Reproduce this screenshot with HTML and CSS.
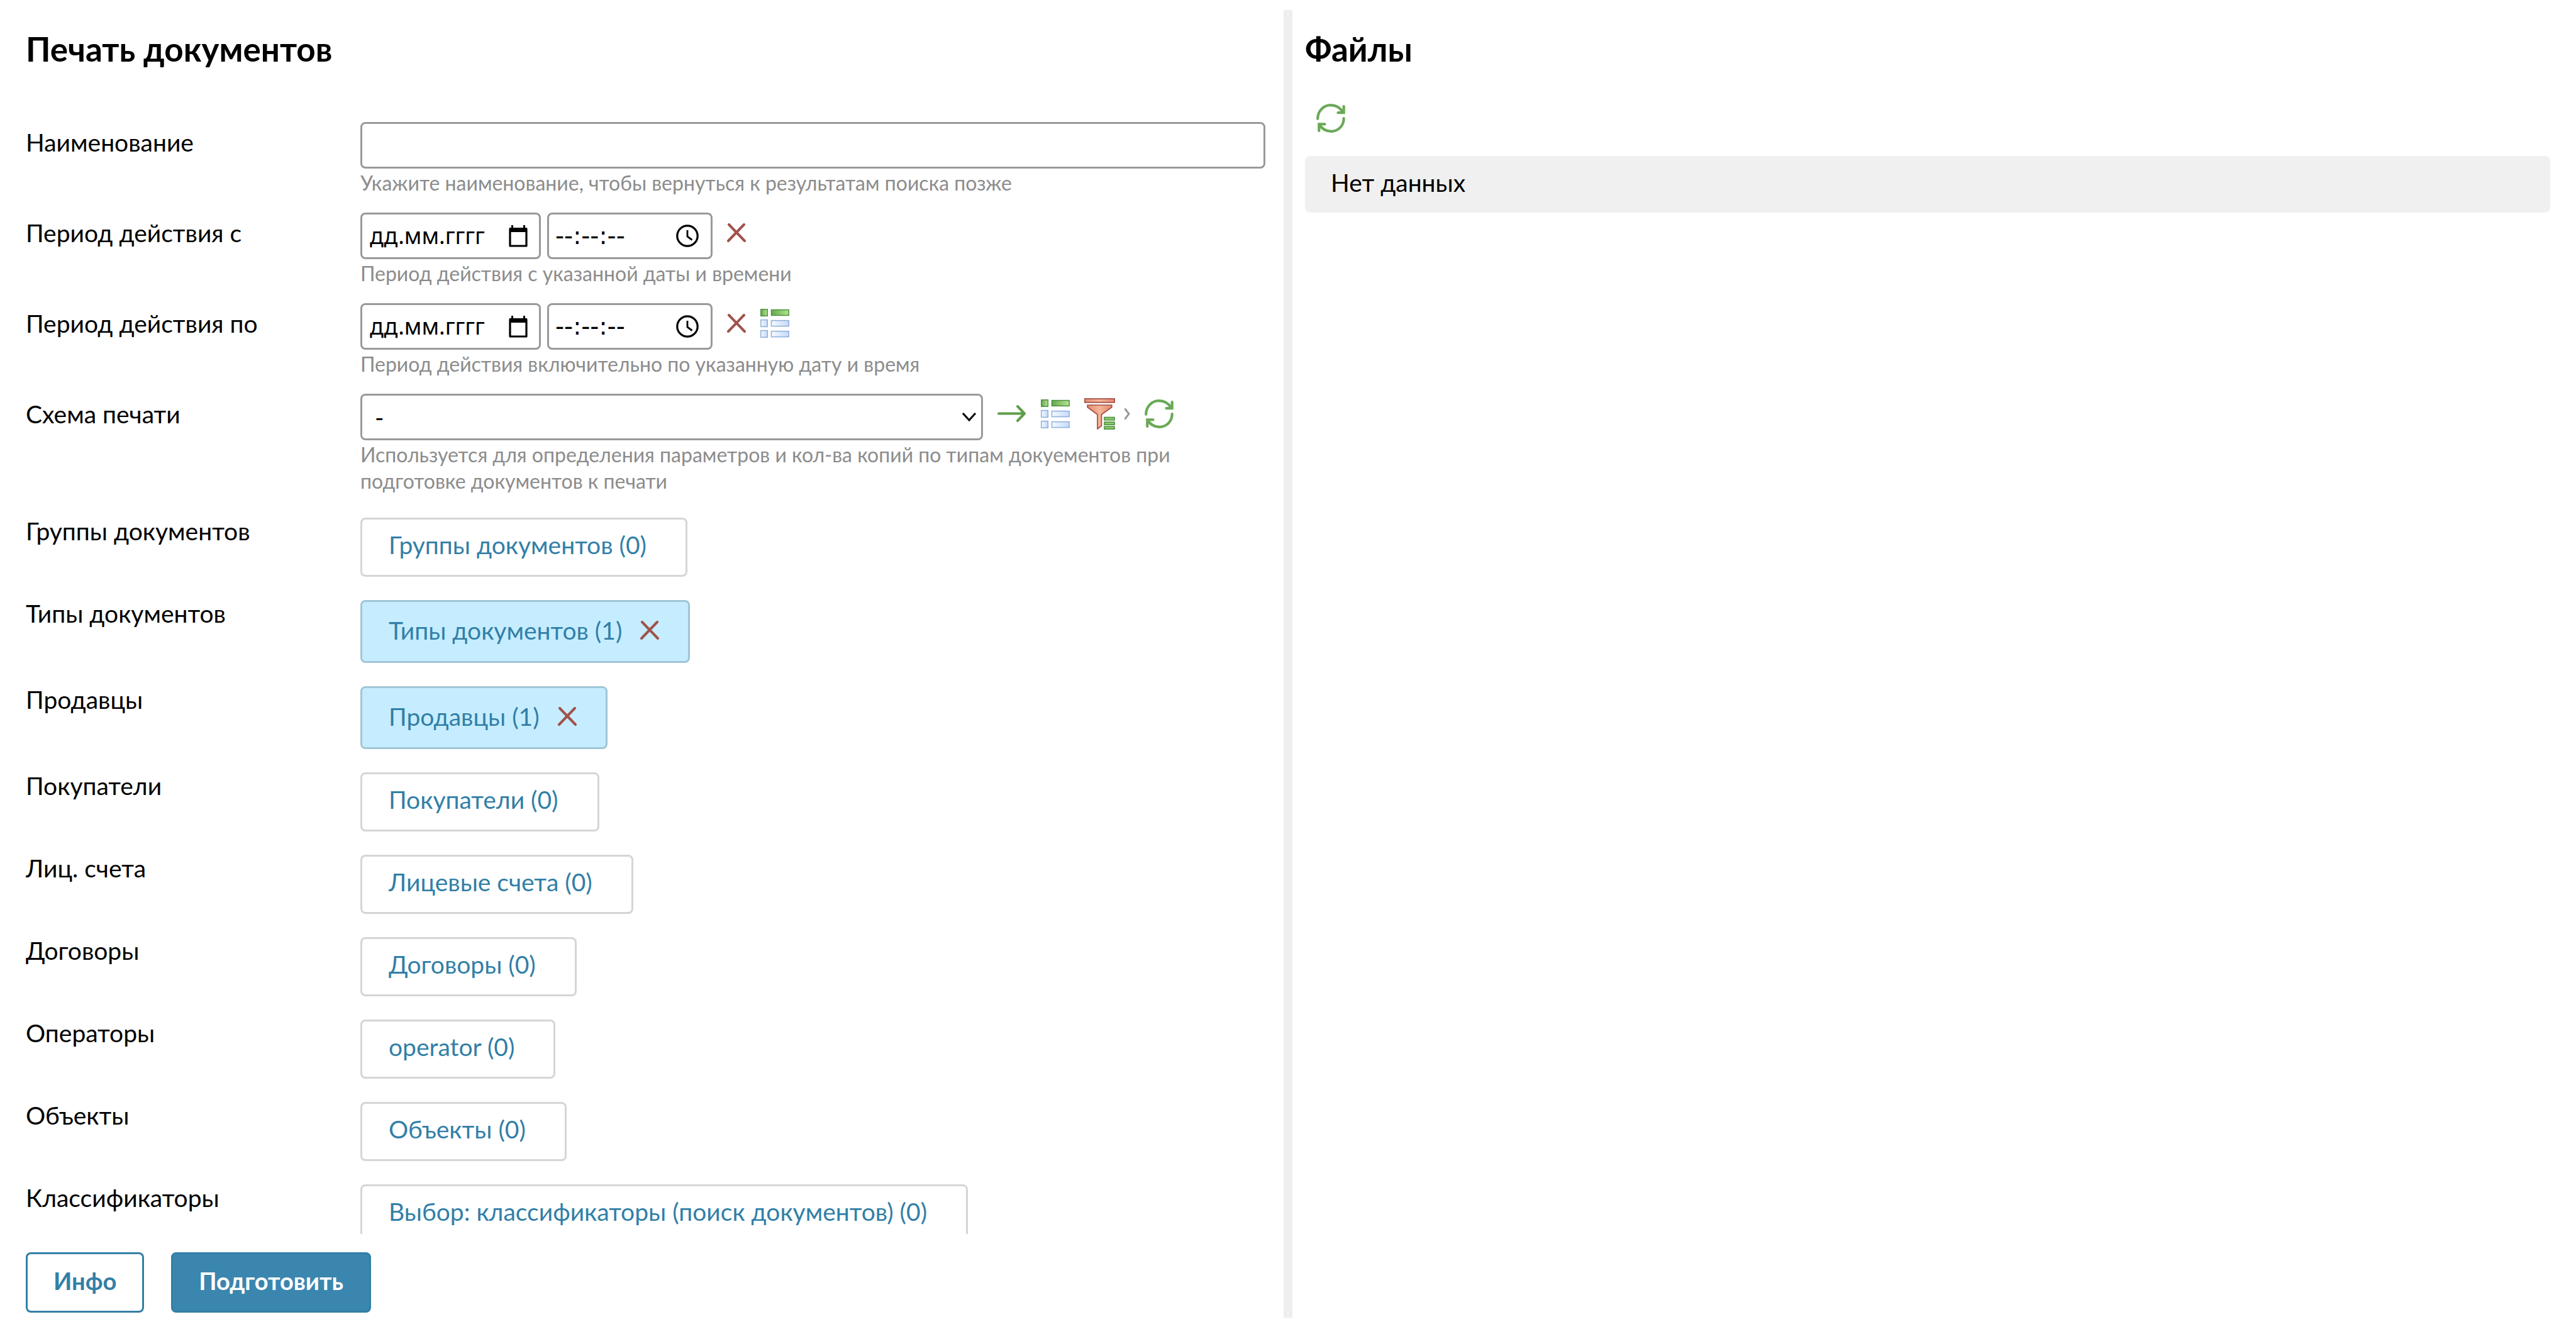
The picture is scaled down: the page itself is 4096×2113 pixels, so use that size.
FILE: index.html
```
<!DOCTYPE html>
<html lang="ru">
<head>
    <meta charset="UTF-8">
    <meta name="viewport" content="width=device-width, initial-scale=1.0">
    <title>Печать документов</title>

    <link rel="stylesheet" href="styles.css">
</head>
<body>

    <!-- shared icons -->
    <svg class="sprite" width="0" height="0" aria-hidden="true">
        <defs>
            <linearGradient id="green" x1="0" x2="1" y1="0" y2="0">
                <stop offset="0" stop-color="#64a74c"/>
                <stop offset="1" stop-color="#b4e692"/>
            </linearGradient>
            <linearGradient id="blue" x1="0" x2="1" y1="0" y2="0">
                <stop offset="0" stop-color="#f4f9ff"/>
                <stop offset="1" stop-color="#c6dafa"/>
            </linearGradient>
            <linearGradient id="red" x1="0" x2="1" y1="0" y2="0">
                <stop offset="0" stop-color="#e08f74"/>
                <stop offset="0.5" stop-color="#f4b598"/>
                <stop offset="1" stop-color="#e2886e"/>
            </linearGradient>
        </defs>
        <symbol id="icon-cross" viewBox="0 0 30 30">
            <path d="M3 2 L28 28 M27 2 L2 28" fill="none" stroke="#a0524b" stroke-width="4" stroke-linecap="round"/>
        </symbol>
        <symbol id="icon-list" viewBox="0 0 46 46">
            <g fill="url(#green)" stroke="#4f9240" stroke-width="1.5">
                <rect x="0.8" y="0.8" width="10.5" height="10.5"/>
                <rect x="17.5" y="1.6" width="27.7" height="8.8"/>
            </g>
            <g fill="url(#blue)" stroke="#8fafdb" stroke-width="1.5">
                <rect x="0.8" y="17.6" width="10.5" height="10.8"/>
                <rect x="17.5" y="18.6" width="27.7" height="9"/>
                <rect x="0.8" y="34.6" width="10.5" height="10.6"/>
                <rect x="17.5" y="35.6" width="27.7" height="9"/>
            </g>
        </symbol>
        <symbol id="icon-arrow" viewBox="0 0 46 46">
            <path d="M2 22.5 H43 M32 11 L43 22.5 L32 34" fill="none" stroke="#5f9e4a" stroke-width="4" stroke-linecap="round" stroke-linejoin="round"/>
        </symbol>
        <symbol id="icon-funnel" viewBox="0 0 49 50">
            <g fill="url(#red)" stroke="#a54c44" stroke-width="1.7">
                <rect x="0.9" y="1" width="47.2" height="5.8"/>
                <path d="M5.2 11 H43.8 V14.5 L27.5 26 V44 L21 49 V26 L5.2 14.5 Z"/>
            </g>
            <g fill="#8ccb6c" stroke="#4f9240" stroke-width="1.6">
                <rect x="32" y="30.5" width="16" height="4.3"/>
                <rect x="32" y="38" width="16" height="4.3"/>
                <rect x="32" y="45.2" width="16" height="4"/>
            </g>
        </symbol>
        <symbol id="icon-next" viewBox="0 0 10 20">
            <path d="M1.5 1.5 L8 10 L1.5 18.5" fill="none" stroke="#999" stroke-width="3"/>
        </symbol>
        <symbol id="icon-refresh" viewBox="0 0 46 46">
            <g fill="none" stroke="#6aa956" stroke-width="4.2" stroke-linecap="round">
                <path d="M2.2 23.8 C2.2 11 12 2.2 22.8 2.2 C31 2.2 38 6.500 42.500 13.500"/>
                <path d="M43.700 4 V14.200 H34.500"/>
                <path d="M43.700 23 C43.700 36 34 43.800 23.500 43.800 C15.500 43.800 9 39.500 5 33.500"/>
                <path d="M4.300 43 V32.300 H13.500"/>
            </g>
        </symbol>
        <symbol id="icon-calendar" viewBox="0 0 34 36">
            <path d="M4 7 H30 V34 H4 Z" fill="none" stroke="#000" stroke-width="3.2" stroke-linejoin="round"/>
            <path d="M3 5 H31 V12 H3 Z M6 1 H9 V6 H6 Z M25 1 H28 V6 H25 Z"/>
        </symbol>
        <symbol id="icon-clock" viewBox="0 0 36 36">
            <circle cx="18" cy="18" r="16.2" fill="none" stroke="#000" stroke-width="3.2"/>
            <path d="M18 9 V19 L25.5 24.5" fill="none" stroke="#000" stroke-width="2.8"/>
        </symbol>
    </svg>

    <div class="container">
        <section class="panel">
            <h1>Печать документов</h1>

            <form class="form" id="printForm">
                <div class="row">
                    <label class="label" for="name">Наименование</label>
                    <div class="field">
                        <input class="box text-input" type="text" id="name">
                        <p class="hint">Укажите наименование, чтобы вернуться к результатам поиска позже</p>
                    </div>
                </div>

                <div class="row">
                    <label class="label" for="dateFrom">Период действия с</label>
                    <div class="field">
                        <div class="controls">
                            <div class="period">
                                <span class="box date-box">
                                    <input type="text" id="dateFrom" placeholder="дд.мм.гггг">
                                    <button type="button" aria-label="Выбрать дату"><svg width="34" height="36"><use href="#icon-calendar"/></svg></button>
                                </span>
                                <span class="box time-box">
                                    <input type="text" aria-label="Время начала" placeholder="--:--:--">
                                    <button type="button" aria-label="Выбрать время"><svg width="36" height="36"><use href="#icon-clock"/></svg></button>
                                </span>
                            </div>
                            <button type="button" class="icon-btn" aria-label="Очистить"><svg width="30" height="30"><use href="#icon-cross"/></svg></button>
                        </div>
                        <p class="hint">Период действия с указанной даты и времени</p>
                    </div>
                </div>

                <div class="row">
                    <label class="label" for="dateTo">Период действия по</label>
                    <div class="field">
                        <div class="controls">
                            <div class="period">
                                <span class="box date-box">
                                    <input type="text" id="dateTo" placeholder="дд.мм.гггг">
                                    <button type="button" aria-label="Выбрать дату"><svg width="34" height="36"><use href="#icon-calendar"/></svg></button>
                                </span>
                                <span class="box time-box">
                                    <input type="text" aria-label="Время окончания" placeholder="--:--:--">
                                    <button type="button" aria-label="Выбрать время"><svg width="36" height="36"><use href="#icon-clock"/></svg></button>
                                </span>
                            </div>
                            <button type="button" class="icon-btn" aria-label="Очистить"><svg width="30" height="30"><use href="#icon-cross"/></svg></button>
                            <button type="button" class="icon-btn" aria-label="Список"><svg width="46" height="46"><use href="#icon-list"/></svg></button>
                        </div>
                        <p class="hint">Период действия включительно по указанную дату и время</p>
                    </div>
                </div>

                <div class="row row-last">
                    <label class="label" for="scheme">Схема печати</label>
                    <div class="field">
                        <div class="controls">
                            <div class="select-wrap">
                                <select class="box" id="scheme">
                                    <option>-</option>
                                </select>
                                <svg class="select-arrow" width="24" height="16" viewBox="0 0 24 16"><path d="M2 2 L12 13 L22 2" fill="none" stroke="#000" stroke-width="3"/></svg>
                            </div>
                            <button type="button" class="icon-btn" aria-label="Перейти"><svg width="46" height="46"><use href="#icon-arrow"/></svg></button>
                            <button type="button" class="icon-btn" aria-label="Список"><svg width="46" height="46"><use href="#icon-list"/></svg></button>
                            <button type="button" class="icon-btn" aria-label="Фильтр">
                                <svg width="49" height="50"><use href="#icon-funnel"/></svg>
                                <svg width="10" height="20"><use href="#icon-next"/></svg>
                            </button>
                            <button type="button" class="icon-btn" aria-label="Обновить"><svg width="46" height="46"><use href="#icon-refresh"/></svg></button>
                        </div>
                        <p class="hint">Используется для определения параметров и кол-ва копий по типам докуементов при подготовке документов к печати</p>
                    </div>
                </div>

                <div class="row pick-row">
                    <label class="label" for="groups">Группы документов</label>
                    <button type="button" class="pick" id="groups">Группы документов (0)</button>
                </div>
                <div class="row pick-row">
                    <label class="label" for="types">Типы документов</label>
                    <div class="pick selected">
                        <button type="button" class="pick-text" id="types">Типы документов (1)</button>
                        <button type="button" class="clear" aria-label="Очистить"><svg width="30" height="30"><use href="#icon-cross"/></svg></button>
                    </div>
                </div>
                <div class="row pick-row">
                    <label class="label" for="sellers">Продавцы</label>
                    <div class="pick selected">
                        <button type="button" class="pick-text" id="sellers">Продавцы (1)</button>
                        <button type="button" class="clear" aria-label="Очистить"><svg width="30" height="30"><use href="#icon-cross"/></svg></button>
                    </div>
                </div>
                <div class="row pick-row">
                    <label class="label" for="buyers">Покупатели</label>
                    <button type="button" class="pick" id="buyers">Покупатели (0)</button>
                </div>
                <div class="row pick-row">
                    <label class="label" for="accounts">Лиц. счета</label>
                    <button type="button" class="pick" id="accounts">Лицевые счета (0)</button>
                </div>
                <div class="row pick-row">
                    <label class="label" for="contracts">Договоры</label>
                    <button type="button" class="pick" id="contracts">Договоры (0)</button>
                </div>
                <div class="row pick-row">
                    <label class="label" for="operators">Операторы</label>
                    <button type="button" class="pick" id="operators">operator (0)</button>
                </div>
                <div class="row pick-row">
                    <label class="label" for="objects">Объекты</label>
                    <button type="button" class="pick" id="objects">Объекты (0)</button>
                </div>
                <div class="row pick-row">
                    <label class="label" for="classifiers">Классификаторы</label>
                    <button type="button" class="pick" id="classifiers">Выбор: классификаторы (поиск документов) (0)</button>
                </div>
            </form>

            <div class="footer">
                <button type="button" class="btn">Инфо</button>
                <button type="submit" form="printForm" class="btn primary">Подготовить</button>
            </div>
        </section>

        <div class="splitter"></div>

        <section class="panel files">
            <h1>Файлы</h1>
            <div class="toolbar">
                <button type="button" class="icon-btn" aria-label="Обновить"><svg width="46" height="46"><use href="#icon-refresh"/></svg></button>
            </div>
            <div class="empty">Нет данных</div>
        </section>
    </div>

</body>
</html>
```
FILE: styles.css
```
* {
    padding: 0;
    margin: 0;
    box-sizing: border-box;
}

body {
    background-color: #fff;
    color: #000;
    font-family: Lato, "Noto Sans", sans-serif;
    font-size: 39px;
    line-height: 42px;
}

button, input, select {
    font: inherit;
    color: inherit;
    background: none;
    border: none;
}

button {
    cursor: pointer;
}

svg {
    display: block;
    flex-shrink: 0;
}

.sprite {
    position: absolute;
}

.container {
    display: grid;
    grid-template-columns: 1fr 14px 1fr;
    height: 100vh;
    padding: 16px 0 18px;
}

.splitter {
    background-color: #eee;
}

.panel {
    display: flex;
    flex-direction: column;
    min-width: 0;
    min-height: 0;
    padding: 27px 29px 8px 41px;
}

.files {
    padding: 27px 41px 8px 20px;
}

h1 {
    font-size: 53px;
    line-height: 70px;
    margin-bottom: 43px;
}

/* form */

.form {
    flex: 1;
    min-height: 0;
    overflow: hidden;
    padding-top: 38px;
    margin-bottom: 29px;
}

.row {
    display: grid;
    grid-template-columns: 532px 1fr;
    align-items: start;
    margin-bottom: 26px;
}

.row-last, .pick-row {
    margin-bottom: 37px;
}

.label {
    padding-top: 11px;
}

.pick-row .label {
    padding-top: 0;
}

.box {
    height: 74px;
    border: 3px solid #999;
    border-radius: 8px;
    background-color: #fff;
}

.text-input {
    display: block;
    width: 100%;
    padding: 0 14px;
}

.hint {
    margin-top: 2px;
    font-size: 32px;
    color: #8c8c8c;
}

.controls {
    display: flex;
    gap: 23px;
}

.period {
    display: flex;
    gap: 10px;
}

.date-box, .time-box {
    display: flex;
    align-items: center;
    justify-content: space-between;
    width: 287px;
    padding: 0 16px 0 12px;
    font-family: "Noto Sans", sans-serif;
    font-size: 36px;
}

.time-box {
    width: 263px;
    padding: 0 19px 0 10px;
    font-family: "DejaVu Sans", sans-serif;
    font-size: 39px;
}

.date-box input, .time-box input {
    flex: 1;
    min-width: 0;
}

.date-box input::placeholder, .time-box input::placeholder {
    color: #000;
}

.icon-btn {
    display: flex;
    align-items: center;
    gap: 14px;
    height: 64px;
}

.select-wrap {
    position: relative;
    flex: 0 1 990px;
}

.select-wrap select {
    appearance: none;
    width: 100%;
    padding: 0 60px 0 20px;
}

.select-arrow {
    position: absolute;
    right: 10px;
    top: 29px;
    pointer-events: none;
}

/* selection buttons */

.pick {
    justify-self: start;
    height: 94px;
    padding: 0 62px 8px 42px;
    border: 3px solid #d5d5d5;
    border-radius: 8px;
    color: #327fa7;
    white-space: nowrap;
}

.pick.selected {
    display: flex;
    align-items: center;
    gap: 29px;
    height: 100px;
    padding: 0 46px 4px 42px;
    background-color: #c5edff;
    border-color: #a0c6d6;
}

/* bottom buttons */

.footer {
    display: flex;
    gap: 43px;
}

.btn {
    height: 96px;
    padding: 0 41px 6px;
    border: 3px solid #327fa7;
    border-radius: 8px;
    color: #327fa7;
    font-size: 38px;
    font-weight: bold;
}

.btn.primary {
    background-color: #3b86ae;
    color: #fff;
}

/* files */

.toolbar {
    padding: 0 18px;
    margin-bottom: 28px;
}

.empty {
    padding: 21px 41px 27px;
    border-radius: 8px;
    background-color: #f0f0f0;
}
```
